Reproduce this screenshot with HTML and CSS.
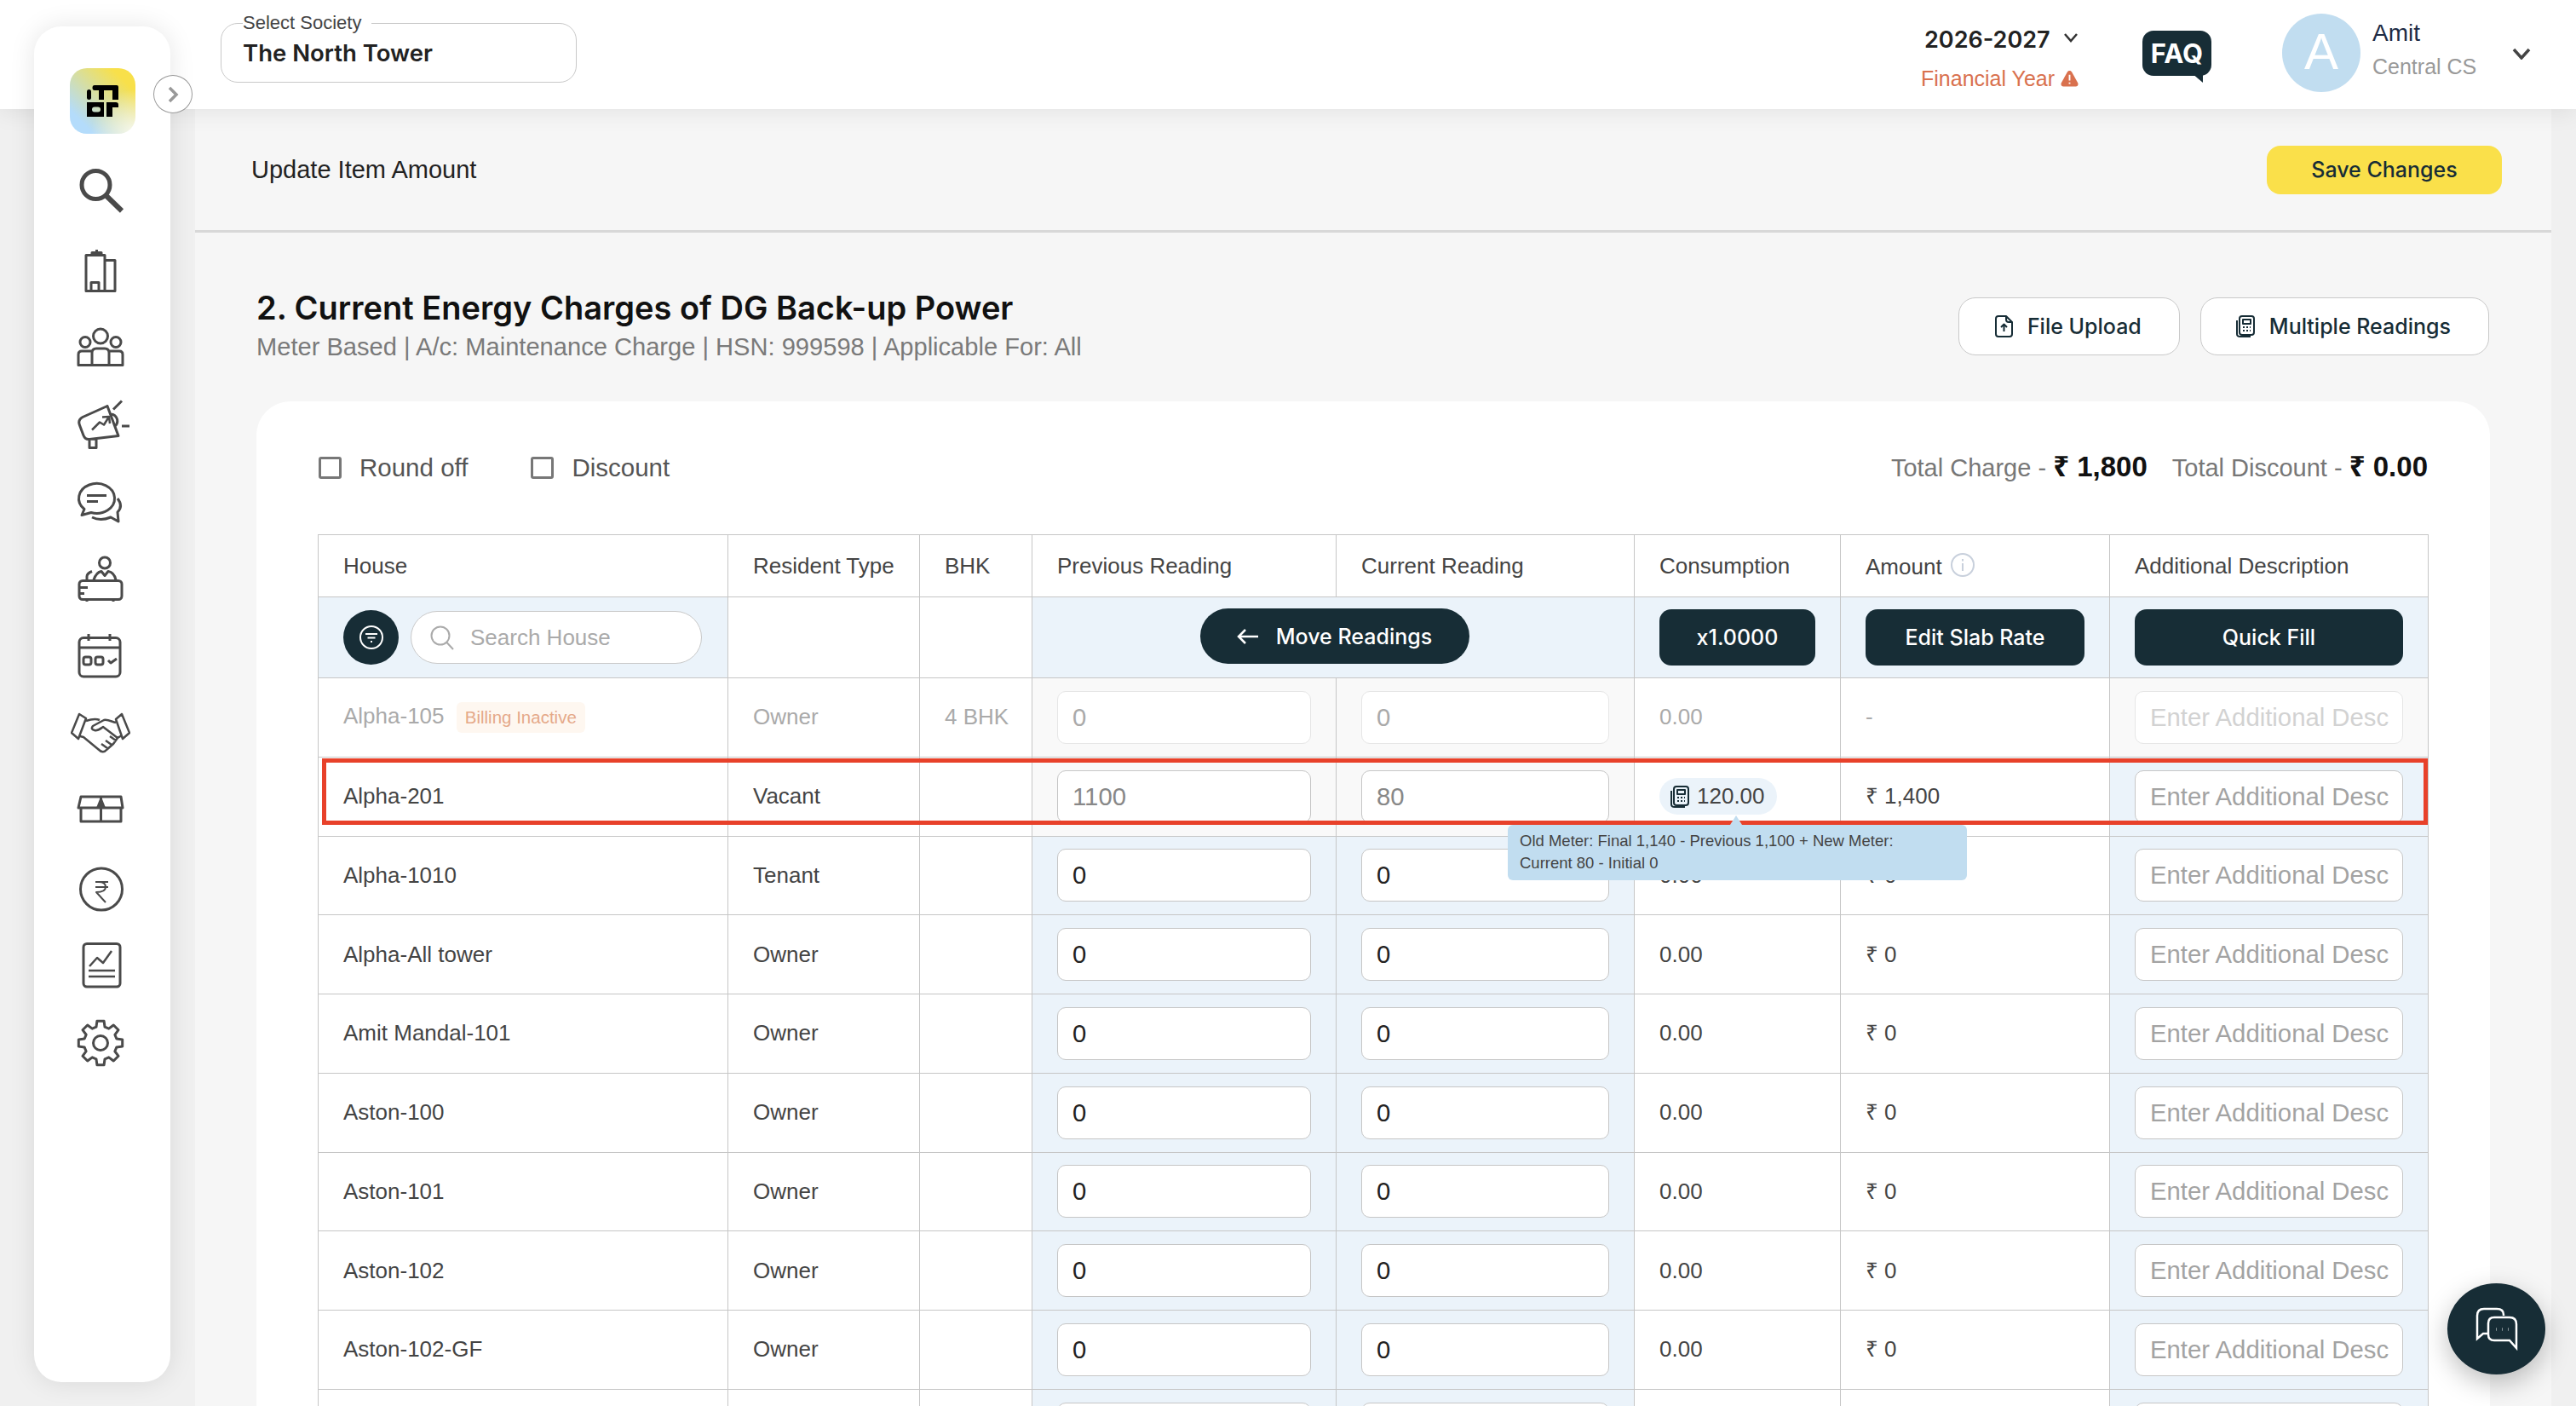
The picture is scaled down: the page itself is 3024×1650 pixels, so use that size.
FILE: index.html
```html
<!DOCTYPE html>
<html lang="en">
<head>
    <meta charset="UTF-8">
    <title>Update Item Amount</title>
    <link rel="stylesheet" href="styles.css">
</head>
<body>
    <header class="topbar">
        <fieldset class="society">
            <legend>Select Society</legend>
            <div class="society-name">The North Tower</div>
        </fieldset>
        <div class="topbar-right">
            <div class="year">
                <div class="year-value">2026-2027
                    <svg class="year-chevron" viewBox="0 0 18 12"><path d="M2 2l7 8 7-8"/></svg>
                </div>
                <div class="year-label">Financial Year
                    <svg class="warn" viewBox="0 0 22 20"><path d="M11 0c1.300 0 2.200.7 2.900 1.900l7.300 13.200c1 1.900-.2 4.400-2.500 4.400H3.300C1 19.500-.2 17 .8 15.100L8.100 1.900C8.800.7 9.700 0 11 0z" fill="#d9714e"/><path d="M11 5v7M11 14.500v1.800" stroke="#fff" stroke-width="2"/></svg>
                </div>
            </div>
            <div class="faq">FAQ</div>
            <div class="avatar">A</div>
            <div class="user">
                <div class="user-name">Amit</div>
                <div class="user-role">Central CS</div>
            </div>
            <svg class="user-chevron" viewBox="0 0 22 14"><path d="M2 2l9 10 9-10"/></svg>
        </div>
    </header>

    <aside class="sidebar">
        <div class="logo">
            <svg viewBox="0 0 77 77">
                <rect x="20" y="25" width="5" height="12" rx="2.500"/>
                <path d="M29 20H55q2 0 2 2V37H50V26H40V37H34V26H29q-2.500 0-2.500-3T29 20z"/>
                <path fill-rule="evenodd" d="M20 40H40V57H20zM29 45.500h4q3 0 3 3t-3 3h-4q-3 0-3-3t3-3z"/>
                <path d="M43 40H54q3 0 3 3v3H50V57H43z"/>
            </svg>
        </div>
        <nav class="nav">
            <a class="nav-item"><svg viewBox="0 0 70 70"><circle cx="29.500" cy="29" r="16.500" stroke-width="5"/><path d="M41.500 41.500L60 59.500" stroke-width="6"/></svg></a>
            <a class="nav-item"><svg viewBox="0 0 70 70"><path d="M18 62.500V20.500H40V62.500zM40 26.500H52V62.500H40M24 62.500V52.500H33V62.500M25 20.500V17.500H36V20.500M30.500 17.500V14"/></svg></a>
            <a class="nav-item"><svg viewBox="0 0 70 70"><circle cx="35" cy="24.500" r="8.500"/><circle cx="17" cy="31.500" r="6"/><circle cx="53" cy="31.500" r="6"/><path d="M25 58.500V44q0-5 5-5h10q5 0 5 5v14.500M25 42H13q-4 0-4 4v12.500H61V46q0-4-4-4H45"/></svg></a>
            <a class="nav-item"><svg viewBox="0 0 70 70"><path d="M43 15.500L14 28.500Q8 32 10.500 38L15 50Q17 55 22 54.500L56 50.500zM22 55V64.500H30V54M47 25a8 8 0 0 1 5 14M50 19.500L60 9.500M60 39H69"/><path d="M25 43.500L34 34.500 39 37.500 45 28M37 28.500l8-.5 1 8" stroke-width="2.500"/></svg></a>
            <a class="nav-item"><svg viewBox="0 0 70 70"><path d="M24 49.500A21 17.500 0 1 0 16 45.500L13 52.500zM55 33Q62 42 55 49L56 60 47 55Q35 60 25 55M19 29.500H42M19 36.500H32"/></svg></a>
            <a class="nav-item"><svg viewBox="0 0 70 70"><circle cx="40" cy="17.500" r="6.500"/><rect x="10" y="38.500" width="50" height="22" rx="4"/><path d="M19 60.500V63M50 60.500V63M10 46.500H20M10 53.500H16M19 37.500V33.500Q19 30 25 27.500M27 37.500Q30 28.500 36 27.500L40 32.500 44 27.500Q51 28.500 53 37.500"/></svg></a>
            <a class="nav-item"><svg viewBox="0 0 70 70"><rect x="10" y="14.500" width="48" height="45.500" rx="5"/><path d="M10 26H58M21 10V18M46 10V18M44 41l3 3 7-5"/><rect x="15" y="37" width="9" height="9" rx="2.500"/><rect x="29" y="37" width="9" height="9" rx="2.500"/></svg></a>
            <a class="nav-item"><svg viewBox="0 0 70 70"><path d="M10 13L18 18 9 42 1 35zM60 13L53 19 61 42 69 35zM18 21C24 19 29 18 34 20M53 23C48 22 44 19 39 20L26 27Q23 31 28 32C32 33 35 30 38 28L55 41M11 39L15 40 32 54Q38 60 42 55L50 48 55 41 60 38M36 48l7 5M41 44l7 5M46 39l7 5" stroke-width="2.500"/></svg></a>
            <a class="nav-item"><svg viewBox="0 0 70 70"><path d="M9 32L12 19H59L61 32zM12 32V48H59V32M35.500 19V48"/><path d="M35.500 18L30 32H41z" fill="#4a4a4a" stroke="none"/></svg></a>
            <a class="nav-item"><svg viewBox="0 0 70 70"><circle cx="36" cy="36.500" r="24.500"/><path d="M29 28H44M29 34H44M33 28Q41 28 41 34Q41 40 30 40L41 52" stroke-width="2"/></svg></a>
            <a class="nav-item"><svg viewBox="0 0 70 70"><rect x="15" y="9.500" width="43" height="50.500" rx="4"/><path d="M22 36L31 26 38 32 48 18" stroke-width="2.500"/><path d="M21 41H52M21 48H52" stroke-width="2.500"/></svg></a>
            <a class="nav-item"><svg viewBox="0 0 70 70"><g transform="translate(35 35)"><path d="M18.800-5.050L25.700-4.070V4.070L18.800 5.050 16.830 9.720 21.050 15.290 15.290 21.050 9.720 16.860 5.050 18.800 4.070 25.700H-4.070L-5.050 18.800-9.720 16.830-15.290 21.050-21.050 15.290-16.860 9.720-18.800 5.050-25.700 4.070V-4.070L-18.800-5.050-16.830-9.720-21.050-15.290-15.290-21.050-9.720-16.860-5.050-18.800-4.070-25.700H4.070L5.050-18.800 9.720-16.830 15.290-21.050 21.050-15.290 16.860-9.720z"/><circle r="8.500"/></g></svg></a>
        </nav>
    </aside>
    <button class="collapse-btn"><svg viewBox="0 0 14 22"><path d="M3 3l8 8-8 8"/></svg></button>

    <main class="main">
        <div class="page-bar">
            <div class="page-title">Update Item Amount</div>
            <button class="btn-save">Save Changes</button>
        </div>

        <section class="section">
            <div class="section-head">
                <div>
                    <h2>2. Current Energy Charges of DG Back-up Power</h2>
                    <div class="section-sub">Meter Based | A/c: Maintenance Charge | HSN: 999598 | Applicable For: All</div>
                </div>
                <div class="section-actions">
                    <button class="btn-outline">
                        <svg class="btn-icon" viewBox="0 0 24 28"><path d="M3 5q0-3 3-3h9l7 7v14q0 3-3 3H6q-3 0-3-3zM15 2v4q0 3 3 3h4M12.500 20v-8M9 15l3.500-3.500L16 15"/></svg>
                        File Upload
                    </button>
                    <button class="btn-outline">
                        <svg class="btn-icon" viewBox="0 0 24 28"><use href="#meter"/></svg>
                        Multiple Readings
                    </button>
                </div>
            </div>

            <div class="card">
                <div class="card-top">
                    <label class="check"><span class="check-box"></span>Round off</label>
                    <label class="check"><span class="check-box"></span>Discount</label>
                    <div class="totals">
                        <span>Total Charge - <b><span class="rupee">₹</span> 1,800</b></span>
                        <span>Total Discount - <b><span class="rupee">₹</span> 0.00</b></span>
                    </div>
                </div>

                <div class="table-wrap">
                    <table class="grid">
                        <colgroup>
                            <col class="c-house"><col class="c-type"><col class="c-bhk"><col class="c-prev"><col class="c-cur"><col class="c-cons"><col class="c-amt"><col class="c-desc">
                        </colgroup>
                        <thead>
                            <tr class="head-row">
                                <th>House</th>
                                <th>Resident Type</th>
                                <th>BHK</th>
                                <th>Previous Reading</th>
                                <th>Current Reading</th>
                                <th>Consumption</th>
                                <th>Amount <svg class="info" viewBox="0 0 30 30"><circle cx="15" cy="15" r="13"/><path d="M15 13v9M15 8v2.500"/></svg></th>
                                <th>Additional Description</th>
                            </tr>
                            <tr class="tools-row">
                                <td class="blue">
                                    <div class="house-tools">
                                        <button class="filter-btn"><svg viewBox="0 0 30 30"><circle cx="15" cy="15" r="13"/><path d="M8 11H22M10.500 15.500H19.500M14 20h2"/></svg></button>
                                        <div class="search-box">
                                            <svg viewBox="0 0 28 30"><circle cx="12" cy="13" r="10.500"/><path d="M19.500 21L27 29"/></svg>
                                            Search House
                                        </div>
                                    </div>
                                </td>
                                <td></td>
                                <td></td>
                                <td class="blue center" colspan="2">
                                    <button class="btn-move"><svg viewBox="0 0 26 20"><path d="M25 10H2M10 2L2 10l8 8"/></svg>Move Readings</button>
                                </td>
                                <td class="blue"><button class="btn-dark">x1.0000</button></td>
                                <td class="blue"><button class="btn-dark">Edit Slab Rate</button></td>
                                <td class="blue"><button class="btn-dark">Quick Fill</button></td>
                            </tr>
                        </thead>
                        <tbody>
                            <tr class="row-off">
                                <td>Alpha-105 <span class="badge">Billing Inactive</span></td>
                                <td>Owner</td>
                                <td>4 BHK</td>
                                <td class="grey"><input class="field" value="0" disabled></td>
                                <td class="grey"><input class="field" value="0" disabled></td>
                                <td>0.00</td>
                                <td>-</td>
                                <td class="grey"><input class="field" placeholder="Enter Additional Description" disabled></td>
                            </tr>
                            <tr class="row-locked">
                                <td>Alpha-201</td>
                                <td>Vacant</td>
                                <td></td>
                                <td class="grey"><input class="field" value="1100" disabled></td>
                                <td class="grey"><input class="field" value="80" disabled></td>
                                <td><span class="pill"><svg class="btn-icon" viewBox="0 0 24 28"><use href="#meter"/></svg>120.00</span></td>
                                <td><span class="rupee">₹</span> 1,400</td>
                                <td class="blue"><input class="field" placeholder="Enter Additional Description"></td>
                            </tr>
                            <tr>
                                <td>Alpha-1010</td><td>Tenant</td><td></td>
                                <td class="blue"><input class="field" value="0"></td>
                                <td class="blue"><input class="field" value="0"></td>
                                <td>0.00</td><td><span class="rupee">₹</span> 0</td>
                                <td class="blue"><input class="field" placeholder="Enter Additional Description"></td>
                            </tr>
                            <tr>
                                <td>Alpha-All tower</td><td>Owner</td><td></td>
                                <td class="blue"><input class="field" value="0"></td>
                                <td class="blue"><input class="field" value="0"></td>
                                <td>0.00</td><td><span class="rupee">₹</span> 0</td>
                                <td class="blue"><input class="field" placeholder="Enter Additional Description"></td>
                            </tr>
                            <tr>
                                <td>Amit Mandal-101</td><td>Owner</td><td></td>
                                <td class="blue"><input class="field" value="0"></td>
                                <td class="blue"><input class="field" value="0"></td>
                                <td>0.00</td><td><span class="rupee">₹</span> 0</td>
                                <td class="blue"><input class="field" placeholder="Enter Additional Description"></td>
                            </tr>
                            <tr>
                                <td>Aston-100</td><td>Owner</td><td></td>
                                <td class="blue"><input class="field" value="0"></td>
                                <td class="blue"><input class="field" value="0"></td>
                                <td>0.00</td><td><span class="rupee">₹</span> 0</td>
                                <td class="blue"><input class="field" placeholder="Enter Additional Description"></td>
                            </tr>
                            <tr>
                                <td>Aston-101</td><td>Owner</td><td></td>
                                <td class="blue"><input class="field" value="0"></td>
                                <td class="blue"><input class="field" value="0"></td>
                                <td>0.00</td><td><span class="rupee">₹</span> 0</td>
                                <td class="blue"><input class="field" placeholder="Enter Additional Description"></td>
                            </tr>
                            <tr>
                                <td>Aston-102</td><td>Owner</td><td></td>
                                <td class="blue"><input class="field" value="0"></td>
                                <td class="blue"><input class="field" value="0"></td>
                                <td>0.00</td><td><span class="rupee">₹</span> 0</td>
                                <td class="blue"><input class="field" placeholder="Enter Additional Description"></td>
                            </tr>
                            <tr>
                                <td>Aston-102-GF</td><td>Owner</td><td></td>
                                <td class="blue"><input class="field" value="0"></td>
                                <td class="blue"><input class="field" value="0"></td>
                                <td>0.00</td><td><span class="rupee">₹</span> 0</td>
                                <td class="blue"><input class="field" placeholder="Enter Additional Description"></td>
                            </tr>
                            <tr>
                                <td></td><td></td><td></td>
                                <td class="blue"><input class="field"></td>
                                <td class="blue"><input class="field"></td>
                                <td></td><td></td>
                                <td class="blue"><input class="field"></td>
                            </tr>
                        </tbody>
                    </table>

                    <!-- highlight drawn over the Alpha-201 row -->
                    <div class="row-mark"></div>
                    <div class="tip">Old Meter: Final 1,140 - Previous 1,100 + New Meter:<br>Current 80 - Initial 0</div>
                </div>
            </div>
        </section>
    </main>

    <button class="chat-fab">
        <svg viewBox="0 0 52 52"><path d="M34 10V9q0-7-8-7H11Q3 2 3 10V37L10 31H15"/><path d="M23 12H41q8 0 8 8V48L41 39H23q-7 0-7-7V19q0-7 7-7z"/><path d="M25 26h.5M32 26h.5M39 26h.5" stroke-width="3.500"/></svg>
    </button>

    <svg class="defs">
        <symbol id="meter" viewBox="0 0 24 28">
            <path d="M8 2h11q3 0 3 3v16q0 3-3 3H8q-3 0-3-3V5q0-3 3-3z" fill="none"/>
            <path d="M2 7v16q0 3 4 3h12" fill="none"/>
            <path d="M9 6h9v5H9z" fill="none"/>
            <path d="M9 15h2M13 15h2M17 15h1M9 19h2M13 19h2M17 19h1" fill="none"/>
        </symbol>
    </svg>
</body>
</html>
```
FILE: styles.css
```css
* {
    margin: 0;
    padding: 0;
    box-sizing: border-box;
}

body {
    font-family: 'Liberation Sans', Arial, sans-serif;
    background: #f0f0f0;
    width: 3024px;
    height: 1650px;
    overflow: hidden;
    position: relative;
    color: #444;
}

button {
    font-family: inherit;
    border: none;
    cursor: pointer;
}

.defs {
    display: none;
}

.rupee {
    font-family: 'Noto Sans', 'DejaVu Sans', sans-serif;
    line-height: 0;
}

/* top bar */
.topbar {
    height: 128px;
    background: #fff;
    display: flex;
    align-items: flex-start;
    padding-left: 259px;
    box-shadow: 0 4px 26px rgba(0, 0, 0, 0.08);
    position: relative;
}

.society {
    width: 418px;
    height: 83px;
    margin-top: 14px;
    border: 1px solid #c9c9c9;
    border-radius: 20px;
    padding: 0 25px;
}

.society legend {
    font-size: 22px;
    color: #444;
    padding: 0 12px 0 0;
    line-height: 26px;
}

.society-name {
    font-family: Inter, sans-serif;
    font-size: 27.500px;
    font-weight: 600;
    color: #222;
    margin-top: 5px;
}

.topbar-right {
    margin-left: auto;
    display: flex;
    align-items: flex-start;
    padding-right: 53px;
}

.year {
    width: 190px;
    margin-top: 29px;
    margin-right: 70px;
    padding-left: 4px;
}

.year-value {
    font-family: Inter, sans-serif;
    font-size: 27px;
    font-weight: 600;
    color: #222;
    line-height: 36px;
    display: flex;
    align-items: center;
    gap: 15px;
}

.year-chevron {
    width: 18px;
    height: 12px;
    margin-top: -6px;
    fill: none;
    stroke: #333;
    stroke-width: 2.500;
}

.year-label {
    font-size: 25px;
    color: #d9714e;
    line-height: 30px;
    margin-top: 12px;
    margin-left: -4px;
    display: flex;
    align-items: center;
    gap: 7px;
    white-space: nowrap;
}

.warn {
    width: 21px;
    height: 19px;
}

.faq {
    width: 81px;
    height: 53px;
    margin-top: 36px;
    margin-right: 83px;
    background: #172d36;
    border-radius: 13px;
    color: #fff;
    font-family: Inter, sans-serif;
    font-weight: 700;
    font-size: 31px;
    text-align: center;
    line-height: 53px;
    position: relative;
}

.faq::after {
    content: "";
    position: absolute;
    left: 58px;
    top: 50px;
    width: 13px;
    height: 11px;
    background: #172d36;
    clip-path: polygon(0 0, 100% 0, 100% 100%);
}

.avatar {
    width: 92px;
    height: 92px;
    margin-top: 16px;
    border-radius: 50%;
    background: #c1ddf0;
    color: #fff;
    font-size: 60px;
    text-align: center;
    line-height: 90px;
}

.user {
    width: 160px;
    margin-left: 14px;
    margin-top: 21px;
}

.user-name {
    font-size: 28px;
    line-height: 36px;
    color: #1e2b45;
}

.user-role {
    font-size: 25px;
    line-height: 30px;
    color: #999;
    margin-top: 6px;
}

.user-chevron {
    width: 22px;
    height: 14px;
    margin-top: 56px;
    margin-left: 4px;
    fill: none;
    stroke: #444;
    stroke-width: 3.500;
}

/* sidebar */
.sidebar {
    position: absolute;
    left: 40px;
    top: 31px;
    width: 160px;
    height: 1591px;
    background: #fff;
    border-radius: 32px;
    box-shadow: 0 0 30px rgba(0, 0, 0, 0.1);
    padding: 49px 0 0 42px;
}

.logo {
    width: 77px;
    height: 77px;
    border-radius: 20px;
    background:
        radial-gradient(circle at 100% 100%, rgba(255, 255, 255, 0.85), rgba(255, 255, 255, 0) 48%),
        linear-gradient(45deg, #b4dcfb 18%, #f8e04a 82%);
}

.logo svg {
    display: block;
    width: 77px;
    height: 77px;
}

.nav {
    margin-top: 20px;
    margin-left: 1px;
}

.nav-item {
    display: flex;
    align-items: center;
    height: 91px;
}

.nav-item svg {
    width: 70px;
    height: 70px;
    fill: none;
    stroke: #4a4a4a;
    stroke-width: 3;
    stroke-linejoin: round;
}

.collapse-btn {
    position: absolute;
    left: 180px;
    top: 88px;
    width: 46px;
    height: 45px;
    border-radius: 50%;
    background: #fff;
    border: 1px solid #999;
    display: flex;
    align-items: center;
    justify-content: center;
}

.collapse-btn svg {
    width: 14px;
    height: 22px;
    fill: none;
    stroke: #999;
    stroke-width: 3.500;
}

/* main area */
.main {
    margin-left: 229px;
    width: 2766px;
    background: #f6f6f6;
    height: 1522px;
}

.page-bar {
    height: 145px;
    border-bottom: 3px solid #d8d8d8;
    display: flex;
    align-items: center;
    justify-content: space-between;
    padding: 0 58px 0 66px;
}

.page-title {
    font-size: 29px;
    color: #222;
}

.btn-save {
    width: 276px;
    height: 57px;
    border-radius: 16px;
    background: #fae04a;
    color: #172d36;
    font-family: Inter, sans-serif;
    font-size: 25px;
    font-weight: 500;
}

.section {
    padding: 66px 72px 0;
}

.section-head {
    display: flex;
    justify-content: space-between;
    margin-bottom: 47px;
}

h2 {
    font-family: Inter, sans-serif;
    font-size: 38px;
    font-weight: 600;
    line-height: 44px;
    color: #111;
}

.section-sub {
    font-size: 29.100px;
    line-height: 34px;
    margin-top: 7px;
    color: #7a7a7a;
}

.section-actions {
    display: flex;
    gap: 24px;
    margin-top: 10px;
    margin-right: 1px;
}

.btn-outline {
    height: 68px;
    padding: 0 44px 0 40px;
    background: #fff;
    border: 1.500px solid #c9c9c9;
    border-radius: 20px;
    display: flex;
    align-items: center;
    gap: 16px;
    font-family: Inter, sans-serif;
    font-size: 25px;
    font-weight: 500;
    color: #172d36;
}

.btn-icon {
    width: 24px;
    height: 28px;
    fill: none;
    stroke: #172d36;
    stroke-width: 2;
    stroke-linejoin: round;
}

.card {
    background: #fff;
    border-radius: 40px 40px 0 0;
    padding: 52px 73px 0 72px;
    height: 1300px;
}

.card-top {
    height: 52px;
    margin-bottom: 52px;
    display: flex;
    align-items: center;
}

.check {
    display: flex;
    align-items: center;
    gap: 21px;
    font-size: 29.500px;
    color: #555;
    margin-left: 1px;
    margin-right: 73px;
}

.check-box {
    width: 27px;
    height: 26px;
    border: 3px solid #777;
    border-radius: 3px;
}

.totals {
    margin-left: auto;
    margin-top: -3px;
    display: flex;
    gap: 29px;
    font-size: 29px;
    color: #777;
}

.totals b {
    font-size: 33px;
    color: #111;
}

/* readings table */
.table-wrap {
    position: relative;
}

.grid {
    width: 2477px;
    table-layout: fixed;
    border-collapse: collapse;
    font-size: 26px;
    color: #444;
}

.c-house { width: 481px; }
.c-type { width: 225px; }
.c-bhk { width: 132px; }
.c-prev { width: 357px; }
.c-cur { width: 350px; }
.c-cons { width: 242px; }
.c-amt { width: 316px; }
.c-desc { width: 374px; }

.grid th,
.grid td {
    border: 1px solid #c6c6c6;
    padding: 0 29px;
    text-align: left;
    font-weight: 400;
    white-space: nowrap;
}

.head-row th {
    height: 73px;
    background: #fff;
}

.tools-row td {
    height: 95px;
}

tbody td {
    height: 92.750px;
}

.blue {
    background: #ebf3fa;
}

.grey {
    background: #f9f9f9;
}

.center {
    text-align: center !important;
}

.info {
    width: 30px;
    height: 30px;
    vertical-align: -4px;
    margin-left: 2px;
    fill: none;
    stroke: #c8d0dc;
    stroke-width: 2;
}

.house-tools {
    display: flex;
    align-items: center;
    gap: 14px;
}

.filter-btn {
    width: 65px;
    height: 64px;
    flex-shrink: 0;
    border-radius: 50%;
    background: #172d36;
    display: flex;
    align-items: center;
    justify-content: center;
}

.filter-btn svg {
    width: 30px;
    height: 30px;
    fill: none;
    stroke: #fff;
    stroke-width: 2;
}

.search-box {
    width: 342px;
    height: 62px;
    border: 1.500px solid #c9c9c9;
    border-radius: 31px;
    background: #fff;
    display: flex;
    align-items: center;
    gap: 19px;
    padding-left: 22px;
    font-size: 26px;
    color: #aaa;
}

.search-box svg {
    width: 28px;
    height: 30px;
    fill: none;
    stroke: #aaa;
    stroke-width: 2;
}

.btn-dark {
    width: 100%;
    height: 66px;
    border-radius: 14px;
    background: #172d36;
    color: #fff;
    font-family: Inter, sans-serif;
    font-size: 25px;
    font-weight: 500;
    display: block;
}

.btn-move {
    width: 316px;
    height: 65px;
    margin-left: 3px;
    margin-bottom: 3px;
    border-radius: 33px;
    background: #172d36;
    color: #fff;
    font-family: Inter, sans-serif;
    font-size: 25px;
    font-weight: 500;
    display: inline-flex;
    align-items: center;
    justify-content: center;
    gap: 20px;
    vertical-align: middle;
}

.btn-move svg {
    width: 26px;
    height: 20px;
    fill: none;
    stroke: #fff;
    stroke-width: 2.500;
}

.field {
    display: block;
    width: 100%;
    height: 62px;
    padding: 0 16px 0 17px;
    border: 1.500px solid #c6c6c6;
    border-radius: 10px;
    background: #fff;
    font-family: 'Liberation Sans', Arial, sans-serif;
    font-size: 29.300px;
    color: #222;
}

.field::placeholder {
    color: #a3a3a3;
    opacity: 1;
}

.field:disabled {
    color: #888;
    background: #fff;
}

.row-off td {
    color: #aaa;
}

.row-off .field {
    border-color: #e6e6e6;
    color: #aaa;
}

.row-off .field::placeholder {
    color: #d2d2d2;
}

.badge {
    display: inline-block;
    height: 36px;
    line-height: 36px;
    margin-left: 7px;
    padding: 0 10px;
    border-radius: 6px;
    background: #fef7f0;
    color: #e5a989;
    font-size: 20.500px;
}

.pill {
    display: inline-flex;
    align-items: center;
    gap: 8px;
    height: 43px;
    padding: 0 14px 0 12px;
    border-radius: 22px;
    background: #ebf3fa;
}

.row-mark {
    position: absolute;
    left: 5px;
    top: 263px;
    width: 2472px;
    height: 78px;
    border: 5px solid #e8412a;
    pointer-events: none;
}

.tip {
    position: absolute;
    left: 1397px;
    top: 341px;
    width: 539px;
    height: 65px;
    padding: 6px 14px;
    border-radius: 6px;
    background: #c1ddf0;
    color: #444;
    font-size: 18.500px;
    line-height: 26px;
}

.tip::before {
    content: "";
    position: absolute;
    left: 261px;
    top: -11px;
    width: 14px;
    height: 11px;
    background: #c1ddf0;
    clip-path: polygon(50% 0, 100% 100%, 0 100%);
}

.chat-fab {
    position: absolute;
    left: 2873px;
    top: 1506px;
    width: 115px;
    height: 107px;
    border-radius: 50%;
    background: #172d36;
    box-shadow: 0 10px 30px rgba(0, 0, 0, 0.25);
    display: flex;
    align-items: center;
    justify-content: center;
}

.chat-fab svg {
    width: 52px;
    height: 52px;
    fill: none;
    stroke: #fff;
    stroke-width: 2.500;
}
```
